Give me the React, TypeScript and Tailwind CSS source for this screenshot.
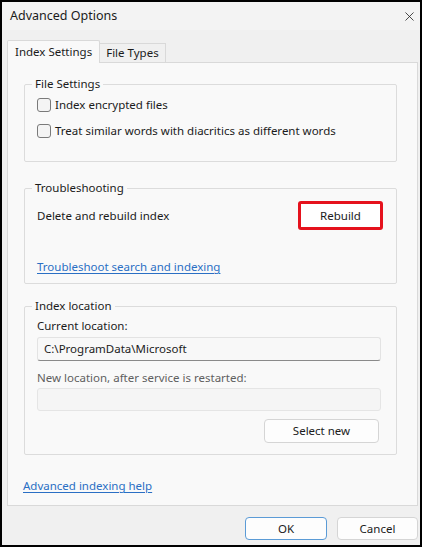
import { X } from "lucide-react";

function Group({
  title,
  className,
  children,
}: {
  title: string;
  className?: string;
  children: React.ReactNode;
}) {
  return (
    <fieldset
      className={`mx-4 mr-5 rounded-[2px] border border-[#dcdcdc] px-3 ${className ?? ""}`}
    >
      <legend className="-ml-[5px] px-[3px] leading-[14px] text-[#1b1b1b]">
        {title}
      </legend>
      {children}
    </fieldset>
  );
}

function CheckRow({ label }: { label: string }) {
  return (
    <label className="flex items-center gap-[4px]">
      <span className="h-[14px] w-[14px] rounded-[3px] border border-[#7a7a7a] bg-[#f4f4f4]" />
      <span>{label}</span>
    </label>
  );
}

export default function App() {
  return (
    <div className="box-border flex h-[547px] w-[422px] flex-col overflow-hidden border-2 border-black bg-[#f0f0f0] text-[11.5px] text-[#1b1b1b] [font-family:'Noto_Sans','Open_Sans',sans-serif]">
      {/* Title bar */}
      <div className="flex h-[28px] shrink-0 items-center justify-between bg-[#f3f3f3] pl-2 pr-[3px]">
        <span className="text-[12.5px]">Advanced Options</span>
        <X className="h-[15px] w-[15px] text-[#222]" strokeWidth={1.3} />
      </div>

      {/* Tabs */}
      <div className="mt-[10px] flex items-end pl-[5px]">
        <div className="z-10 -mb-px flex h-[23px] items-center rounded-t-[2px] border border-b-0 border-[#d9d9d9] bg-[#f9f9f9] px-[7px]">
          Index Settings
        </div>
        <div className="flex h-[19px] items-center border-t border-r border-[#d9d9d9] bg-[#f0f0f0] px-[6px]">
          File Types
        </div>
      </div>

      {/* Tab panel */}
      <div className="ml-[5px] mr-[2px] flex h-[444px] flex-col border border-[#d9d9d9] bg-[#f9f9f9]">
        <Group title="File Settings" className="mt-[14px] h-[85px]">
          <div className="mt-[5px] flex flex-col gap-[9px]">
            <CheckRow label="Index encrypted files" />
            <CheckRow label="Treat similar words with diacritics as different words" />
          </div>
        </Group>

        <Group title="Troubleshooting" className="mt-[19px] h-[103px]">
          <div className="mt-[6px] flex items-center justify-between pr-[1px]">
            <span>Delete and rebuild index</span>
            <button className="flex h-[29px] w-[85px] items-center justify-center rounded-[3px] border-[3px] border-[#e5121d] bg-white">
              Rebuild
            </button>
          </div>
          <a className="mt-[28px] inline-block text-[#2a6fc4] underline underline-offset-[2px]">
            Troubleshoot search and indexing
          </a>
        </Group>

        <Group title="Index location" className="mt-[15px] h-[156px]">
          <div className="mt-[6px] leading-[14px]">Current location:</div>
          <div className="mt-[4px] mr-[3px] flex h-[24px] items-center rounded-[3px] border border-[#e3e3e3] border-b-[#8a8a8a] bg-[#f8f8f8] px-[6px]">
            C:\ProgramData\Microsoft
          </div>
          <div className="mt-[10px] leading-[14px] text-[#5f5f5f]">
            New location, after service is restarted:
          </div>
          <div className="mt-[3px] mr-[3px] h-[23px] rounded-[3px] border border-[#e5e5e5] bg-[#f5f5f5]" />
          <div className="mt-[8px] flex justify-end pr-[5px]">
            <button className="h-[24px] w-[115px] rounded-[4px] border border-[#d5d5d5] bg-[#fdfdfd]">
              Select new
            </button>
          </div>
        </Group>

        <a className="mt-[22px] ml-[15px] self-start text-[#2a6fc4] underline underline-offset-[2px]">
          Advanced indexing help
        </a>
      </div>

      {/* Footer */}
      <div className="mt-[11px] flex justify-end gap-[10px] pr-[2px]">
        <button className="h-[23px] w-[82px] rounded-[4px] border border-[#5b9bd6] bg-[#fdfdfd]">
          OK
        </button>
        <button className="h-[23px] w-[81px] rounded-[4px] border border-[#d5d5d5] bg-[#fdfdfd]">
          Cancel
        </button>
      </div>
    </div>
  );
}
